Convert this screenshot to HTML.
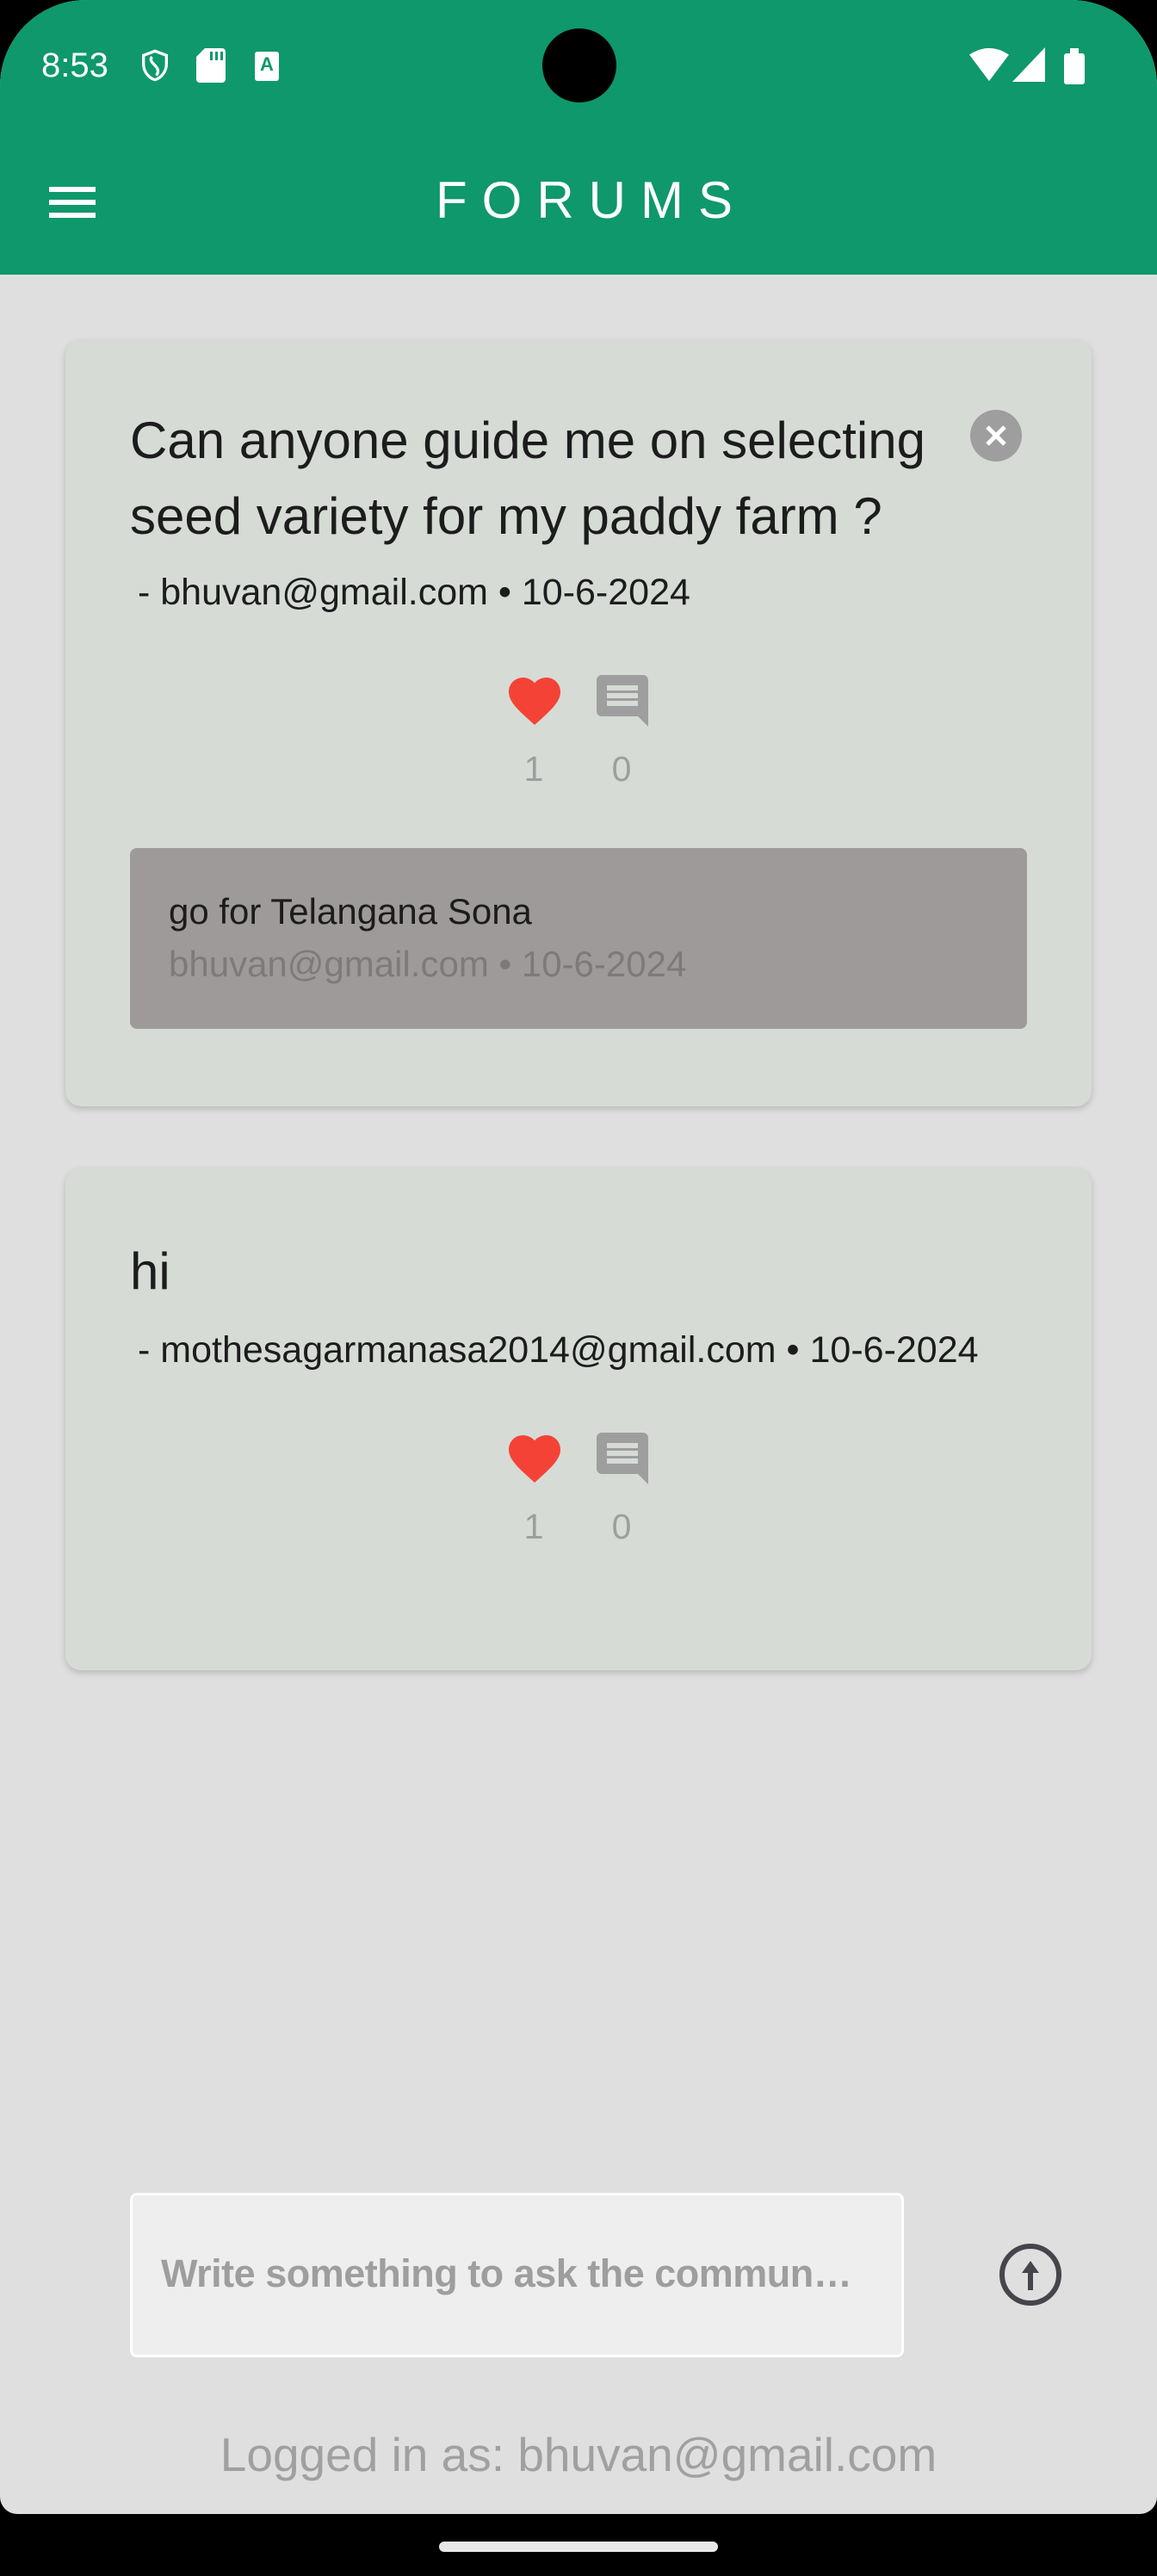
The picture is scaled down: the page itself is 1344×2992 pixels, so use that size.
<!DOCTYPE html>
<html><head><meta charset="utf-8"><style>
*{margin:0;padding:0;box-sizing:border-box}
body{width:1344px;height:2992px;background:#000;font-family:"Liberation Sans",sans-serif;position:relative;overflow:hidden}
.screen{position:absolute;left:0;top:0;width:1344px;height:2920px;background:#dfdfdf;border-radius:100px 100px 20px 20px;overflow:hidden}
.bar{position:absolute;left:0;top:0;width:1344px;height:319px;background:#0e986b}
.abs{position:absolute}
.card{position:absolute;left:76px;width:1192px;background:#d6dbd6;border-radius:18px;box-shadow:0 3px 8px rgba(0,0,0,.18)}
.t{position:absolute;white-space:nowrap}
</style></head><body>
<div class="screen">
<div class="bar"></div>
<div class="t" style="left:48px;top:54px;font-size:40px;color:#fff">8:53</div>
<svg class="abs" style="left:160px;top:55px" width="40" height="42" viewBox="0 0 24 24"><path d="M12 2L4 5v6c0 5 3.4 9.7 8 11 4.6-1.3 8-6 8-11V5z M10 6c-2 2 0 4 2 6s3 4 1 7" fill="none" stroke="#fff" stroke-width="2"/></svg>
<svg class="abs" style="left:228px;top:56px" width="34" height="40" viewBox="0 0 17 20"><path d="M5 0h10a2 2 0 0 1 2 2v16a2 2 0 0 1-2 2H2a2 2 0 0 1-2-2V5z" fill="#fff"/><rect x="8" y="2" width="1.5" height="5" fill="#0e986b"/><rect x="11" y="2" width="1.5" height="5" fill="#0e986b"/><rect x="14" y="2" width="1.5" height="5" fill="#0e986b"/></svg>
<div class="abs" style="left:296px;top:60px;width:28px;height:34px;background:#fff;border-radius:3px;color:#0e986b;font-size:22px;font-weight:bold;text-align:center;line-height:30px">A</div>
<div class="abs" style="left:630px;top:33px;width:86px;height:86px;border-radius:50%;background:#000"></div>
<svg class="abs" style="left:1126px;top:55px" width="46" height="40" viewBox="0 0 24 20"><path d="M12 20L0 4Q12-4 24 4z" fill="#fff"/></svg>
<svg class="abs" style="left:1176px;top:55px" width="38" height="40" viewBox="0 0 19 20"><path d="M19 0V20H0z" fill="#fff"/></svg>
<div class="abs" style="left:1236px;top:62px;width:24px;height:36px;background:#fff;border-radius:3px"></div>
<div class="abs" style="left:1243px;top:56px;width:10px;height:8px;background:#fff"></div>
<div class="abs" style="left:57px;top:217px;width:54px;height:6px;background:#fff"></div>
<div class="abs" style="left:57px;top:232px;width:54px;height:6px;background:#fff"></div>
<div class="abs" style="left:57px;top:247px;width:54px;height:6px;background:#fff"></div>
<div class="t" style="left:0;width:1344px;text-align:center;top:198px;font-size:60px;color:#fff;letter-spacing:17px;padding-left:30px">FORUMS</div>

<div class="card" style="top:395px;height:890px"></div>
<div class="t" style="left:151px;top:468px;font-size:60px;line-height:88px;color:#1c1c1c">Can anyone guide me on selecting<br>seed variety for my paddy farm ?</div>
<div class="abs" style="left:1127px;top:476px;width:60px;height:60px;border-radius:50%;background:#9e9e9e"></div>
<svg class="abs" style="left:1127px;top:476px" width="60" height="60" viewBox="0 0 60 60"><path d="M20 20L40 40M40 20L20 40" stroke="#fff" stroke-width="5"/></svg>
<div class="t" style="left:160px;top:664px;font-size:43px;color:#1c1c1c">- bhuvan@gmail.com • 10-6-2024</div>
<svg class="abs" style="left:585px;top:778px" width="72" height="72" viewBox="0 0 24 24"><path d="M12 21.35l-1.45-1.32C5.4 15.36 2 12.28 2 8.5 2 5.42 4.42 3 7.5 3c1.74 0 3.41.81 4.5 2.09C13.09 3.81 14.76 3 16.5 3 19.58 3 22 5.42 22 8.5c0 3.78-3.4 6.86-8.55 11.54L12 21.35z" fill="#f44336"/></svg>
<svg class="abs" style="left:687px;top:778px" width="72" height="72" viewBox="0 0 24 24"><path d="M21.99 4c0-1.1-.89-2-1.99-2H4c-1.1 0-2 .9-2 2v12c0 1.1.9 2 2 2h14l4 4-.01-18zM18 14H6v-2h12v2zm0-3H6V9h12v2zm0-3H6V6h12v2z" fill="#9e9e9e"/></svg>
<div class="t" style="left:598px;width:44px;text-align:center;top:870px;font-size:41px;color:#9e9e9e">1</div>
<div class="t" style="left:700px;width:44px;text-align:center;top:870px;font-size:41px;color:#9e9e9e">0</div>
<div class="abs" style="left:151px;top:985px;width:1042px;height:210px;background:#9e9a99;border-radius:8px"></div>
<div class="t" style="left:196px;top:1035px;font-size:42px;color:#1c1c1c">go for Telangana Sona</div>
<div class="t" style="left:196px;top:1096px;font-size:42px;color:#7d7a79">bhuvan@gmail.com • 10-6-2024</div>

<div class="card" style="top:1357px;height:583px"></div>
<div class="t" style="left:151px;top:1442px;font-size:60px;color:#1c1c1c">hi</div>
<div class="t" style="left:160px;top:1544px;font-size:43px;color:#1c1c1c">- mothesagarmanasa2014@gmail.com • 10-6-2024</div>
<svg class="abs" style="left:585px;top:1658px" width="72" height="72" viewBox="0 0 24 24"><path d="M12 21.35l-1.45-1.32C5.4 15.36 2 12.28 2 8.5 2 5.42 4.42 3 7.5 3c1.74 0 3.41.81 4.5 2.09C13.09 3.81 14.76 3 16.5 3 19.58 3 22 5.42 22 8.5c0 3.78-3.4 6.86-8.55 11.54L12 21.35z" fill="#f44336"/></svg>
<svg class="abs" style="left:687px;top:1658px" width="72" height="72" viewBox="0 0 24 24"><path d="M21.99 4c0-1.1-.89-2-1.99-2H4c-1.1 0-2 .9-2 2v12c0 1.1.9 2 2 2h14l4 4-.01-18zM18 14H6v-2h12v2zm0-3H6V9h12v2zm0-3H6V6h12v2z" fill="#9e9e9e"/></svg>
<div class="t" style="left:598px;width:44px;text-align:center;top:1750px;font-size:41px;color:#9e9e9e">1</div>
<div class="t" style="left:700px;width:44px;text-align:center;top:1750px;font-size:41px;color:#9e9e9e">0</div>

<div class="abs" style="left:151px;top:2547px;width:899px;height:191px;background:#eeeeee;border:3px solid #fff;border-radius:8px"></div>
<div class="t" style="left:187px;top:2615px;font-size:45px;color:#9e9e9e;font-weight:bold;letter-spacing:-0.5px;width:830px;overflow:hidden">Write something to ask the commun…</div>
<svg class="abs" style="left:1159px;top:2604px" width="76" height="76" viewBox="0 0 76 76"><circle cx="38" cy="38" r="33" fill="none" stroke="#47444c" stroke-width="6"/><path d="M38 56V30" stroke="#47444c" stroke-width="6"/><path d="M28 36L38 22L48 36z" fill="#47444c"/></svg>
<div class="t" style="left:0;width:1344px;text-align:center;top:2819px;font-size:55px;color:#a0a0a0">Logged in as: bhuvan@gmail.com</div>
</div>
<div class="abs" style="left:510px;top:2952px;width:324px;height:12px;background:#e8e8e8;border-radius:6px"></div>
</body></html>
